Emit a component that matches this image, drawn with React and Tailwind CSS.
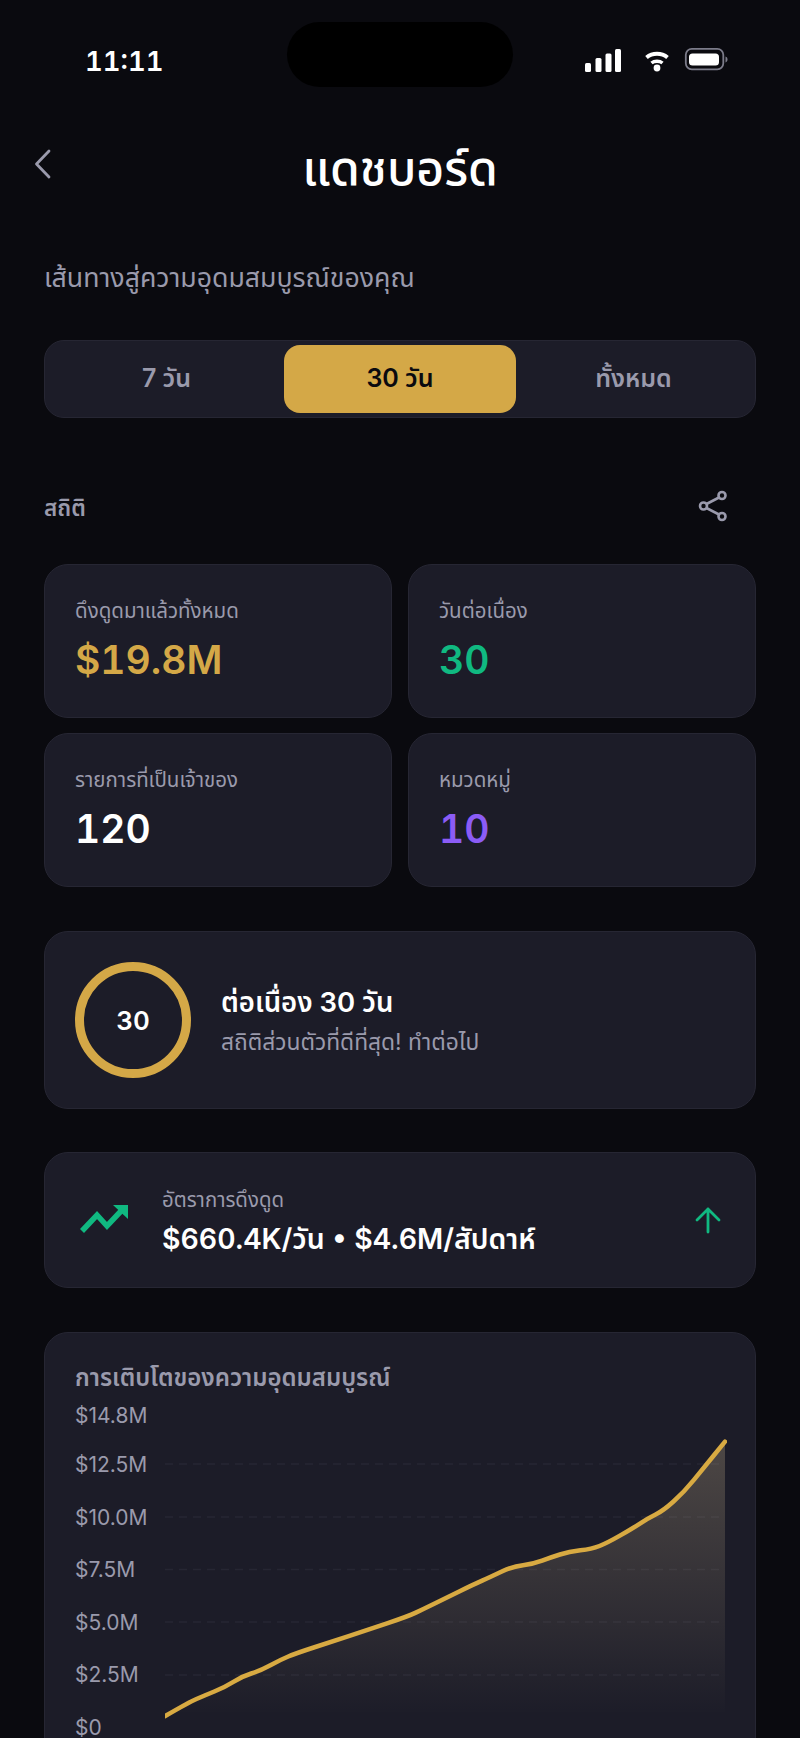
const font = { fontFamily: '"Inter", "Noto Sans", "Noto Sans Thai", sans-serif' };

const points = [
  [164.8, 1717.3], [188.8, 1703.3], [204.1, 1696.7], [224.5, 1688.3], [242.3, 1677.3], [260.2, 1671.7],
  [280.6, 1660.7], [295.9, 1654.3], [331.6, 1642.7], [367.3, 1631], [408.2, 1617.3], [423.5, 1610],
  [443.9, 1600], [474.5, 1585], [489.8, 1578.3], [512.8, 1567.3], [533.2, 1565], [551, 1558.3],
  [568.9, 1552.7], [591.8, 1550], [607.1, 1544], [632.7, 1529.3], [648, 1519.3], [663.3, 1511.7],
  [683.7, 1493.3], [704.1, 1468.3], [725, 1442.7],
];

const smoothLine = () => {
  let d = `M${points[0][0]} ${points[0][1]}`;
  for (let i = 1; i < points.length - 1; i++) {
    const mx = (points[i][0] + points[i + 1][0]) / 2;
    const my = (points[i][1] + points[i + 1][1]) / 2;
    d += ` Q${points[i][0]} ${points[i][1]} ${mx} ${my}`;
  }
  const last = points[points.length - 1];
  return `${d} L${last[0]} ${last[1]}`;
};

const StatusIcons = () => (
  <svg width="144" height="26" viewBox="585 46 144 26" className="ml-[72px] mt-[25px]">
    <g fill="#fff">
      <rect x="585" y="62" width="6" height="9" rx="1.5" />
      <rect x="595.5" y="57" width="6" height="14" rx="1.5" />
      <rect x="605.5" y="52.5" width="6" height="18.5" rx="1.5" />
      <rect x="615" y="48" width="6" height="23" rx="1.5" />
      <circle cx="657" cy="67" r="3.4" />
      <rect x="689" y="52.5" width="30" height="12" rx="3.5" />
      <path d="M725.5 55.5c1.4.4 2 1.6 2 3s-.6 2.600-2 3z" fill="#7c7c8a" />
    </g>
    <path d="M646.5 56.500c6-5 15-5 21 0" fill="none" stroke="#fff" strokeWidth="4" />
    <path d="M651.500 62c3-2.500 8-2.500 11 0" fill="none" stroke="#fff" strokeWidth="3.500" />
    <rect x="685.8" y="47.800" width="37.500" height="20.500" rx="6" fill="none" stroke="#7c7c8a" strokeWidth="1.800" />
  </svg>
);

const StatCard = ({ label, value, color }) => (
  <div className="h-[154px] rounded-[24px] border border-[#262633] bg-[#1c1c28] pl-[30px] pt-[32px]">
    <div className="text-[20.5px] leading-[28px] text-[#9a9aac]">{label}</div>
    <div className={`mt-[11px] text-[39px] font-semibold leading-[48px] tabular-nums ${color}`}>{value}</div>
  </div>
);

const axis = [
  ["$14.8M", "h-[49px]"],
  ["$12.5M", "h-[52.500px]"],
  ["$10.0M", "h-[52.500px]"],
  ["$7.5M", "h-[52.500px]"],
  ["$5.0M", "h-[52.500px]"],
  ["$2.5M", "h-[52.500px]"],
  ["$0", "h-[24px]"],
];

export default function App() {
  const line = smoothLine();
  return (
    <div style={font} className="h-[1738px] w-[800px] overflow-hidden bg-[#0a0a0f] text-white">
      {/* status bar */}
      <div className="flex h-[87px] items-start pl-[85px] pt-[22px]">
        <div className="mt-[22px] w-[202px] text-[27.5px] font-semibold leading-[34px] tabular-nums">11:11</div>
        <div className="h-[65px] w-[226px] rounded-[33px] bg-black" />
        <StatusIcons />
      </div>

      <div className="mt-[50px] grid h-[66px] grid-cols-[100px_1fr_100px] items-center">
        <svg width="20" height="30" viewBox="0 0 20 30" className="ml-[33px] -mt-[12px]" fill="none" stroke="#9a9aac" strokeWidth="2.800" strokeLinecap="round" strokeLinejoin="round">
          <path d="M16 2 L3.500 15 L16 28" />
        </svg>
        <h1 className="-mt-[4px] text-center text-[48px] font-medium leading-[56px]">แดชบอร์ด</h1>
        <div />
      </div>

      <div className="px-[44px]">
        <p className="mt-[58px] text-[26.7px] leading-[32px] text-[#9a9aac]">เส้นทางสู่ความอุดมสมบูรณ์ของคุณ</p>

        <div className="mt-[47px] grid h-[78px] grid-cols-[1fr_232px_1fr] items-stretch rounded-[20px] border border-[#262633] bg-[#1c1c28] p-[4px]">
          <button className="text-[25px] font-semibold text-[#9a9aac]">7 วัน</button>
          <button className="rounded-[16px] bg-[#d4a847] text-[25px] font-semibold text-[#0a0a0f]">30 วัน</button>
          <button className="text-[25px] font-semibold text-[#9a9aac]">ทั้งหมด</button>
        </div>

        <div className="mt-[70px] flex h-[40px] items-center justify-between pr-[28px]">
          <span className="text-[22.5px] font-semibold text-[#9a9aac]">สถิติ</span>
          <svg width="30" height="32" viewBox="0 0 30 32" className="-mt-[5px]" fill="none" stroke="#9a9aac" strokeWidth="2.600">
            <circle cx="24" cy="5.500" r="3.500" />
            <circle cx="5.500" cy="16" r="3.500" />
            <circle cx="24" cy="26.500" r="3.500" />
            <path d="M8.500 14 L21 7.500 M8.500 18 L21 24.500" />
          </svg>
        </div>

        <div className="mt-[36px] grid grid-cols-2 gap-x-[16px] gap-y-[15px]">
          <StatCard label="ดึงดูดมาแล้วทั้งหมด" value="$19.8M" color="text-[#d4a847]" />
          <StatCard label="วันต่อเนื่อง" value="30" color="text-[#10b981]" />
          <StatCard label="รายการที่เป็นเจ้าของ" value="120" color="text-white" />
          <StatCard label="หมวดหมู่" value="10" color="text-[#8b5cf6]" />
        </div>

        <div className="mt-[44px] flex h-[178px] items-center rounded-[24px] border border-[#262633] bg-[#1c1c28] pl-[30px]">
          <div className="flex h-[116px] w-[116px] items-center justify-center rounded-full border-[9px] border-[#d4a847] text-[26px] font-semibold tabular-nums">30</div>
          <div className="ml-[30px]">
            <div className="text-[27.5px] font-semibold leading-[36px]">ต่อเนื่อง 30 วัน</div>
            <div className="mt-[7px] text-[22.8px] leading-[30px] text-[#9a9aac]">สถิติส่วนตัวที่ดีที่สุด! ทำต่อไป</div>
          </div>
        </div>

        <div className="mt-[43px] flex h-[136px] items-center rounded-[24px] border border-[#262633] bg-[#1c1c28] pl-[35px] pr-[33px]">
          <svg width="50" height="32" viewBox="80 1206 50 32" className="shrink-0">
            <path d="M82 1233 L97 1217 L107 1228 L122 1212" fill="none" stroke="#10b981" strokeWidth="5.500" />
            <path d="M113 1207 H128 V1221 Z" fill="#10b981" />
          </svg>
          <div className="ml-[32px] flex-1">
            <div className="mt-[3px] text-[20.4px] leading-[26px] text-[#9a9aac]">อัตราการดึงดูด</div>
            <div className="mt-[8px] text-[28.4px] font-semibold leading-[36px] tabular-nums">$660.4K/วัน • $4.6M/สัปดาห์</div>
          </div>
          <svg width="28" height="28" viewBox="0 0 28 28" fill="none" stroke="#10b981" strokeWidth="2.800" strokeLinecap="round" strokeLinejoin="round">
            <path d="M14 26 V3 M3 14 L14 3 L25 14" />
          </svg>
        </div>

        <div className="mt-[44px] h-[500px] rounded-[24px] border border-[#262633] bg-[#1c1c28] pl-[30px] pr-[30px] pt-[28px]">
          <div className="text-[24px] font-semibold leading-[34px] text-[#9a9aac]">การเติบโตของความอุดมสมบูรณ์</div>
          <div className="mt-[9px] flex">
            <div className="w-[90px] shrink-0 text-[21px] leading-[24px] text-[#9a9aac]">
              {axis.map(([text, h]) => (
                <div key={text} className={h}>{text}</div>
              ))}
            </div>
            <svg width="562" height="333" viewBox="165 1405 562 333" className="shrink-0" fill="none">
              <defs>
                <linearGradient id="area" x1="0" y1="0" x2="0" y2="1">
                  <stop offset="0" stopColor="#e8d0a0" stopOpacity="0.24" />
                  <stop offset="0.6" stopColor="#e8d0a0" stopOpacity="0.1" />
                  <stop offset="1" stopColor="#e8d0a0" stopOpacity="0" />
                </linearGradient>
              </defs>
              {[1465, 1518, 1570.5, 1623, 1676].map((y) => (
                <line key={y} x1="165" x2="725" y1={y} y2={y} stroke="#262633" strokeWidth="1.500" strokeDasharray="8 6" />
              ))}
              <path d={`${line} L725 1713 L165 1713 Z`} fill="url(#area)" />
              <path d={line} stroke="#d8aa42" strokeWidth="4.500" strokeLinecap="round" strokeLinejoin="round" />
            </svg>
          </div>
        </div>
      </div>
    </div>
  );
}
